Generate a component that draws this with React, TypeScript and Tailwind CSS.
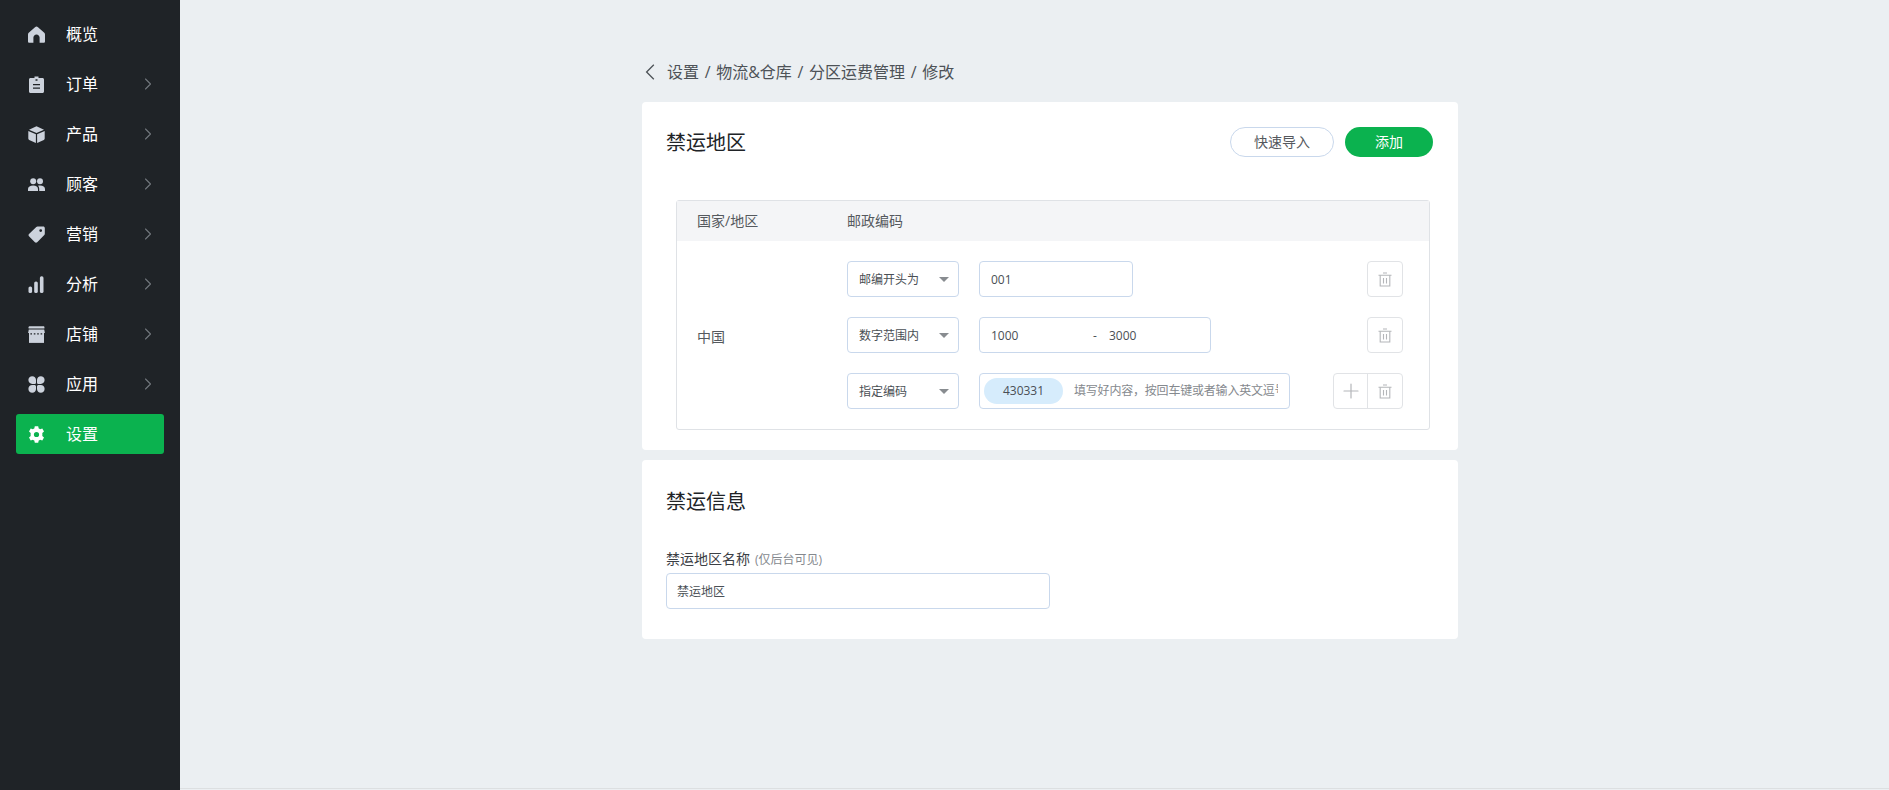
import { ChevronRight, Plus } from "lucide-react"

const font = { fontFamily: '"Open Sans", "Noto Sans CJK SC", sans-serif' }

function HomeIcon() {
  return (
    <svg viewBox="0 0 17 17" className="h-[17px] w-[17px]" fill="currentColor">
      <path d="M8.5 0.5 C9 0.5 9.5 0.8 10 1.2 L16 6.5 C16.6 7 17 7.6 17 8.4 V15.5 C17 16.3 16.4 16.8 15.6 16.8 H11.6 V11.5 C11.6 9.8 10.2 8.4 8.5 8.4 C6.8 8.4 5.4 9.8 5.4 11.5 V16.8 H1.4 C0.6 16.8 0 16.3 0 15.5 V8.4 C0 7.6 0.4 7 1 6.5 L7 1.2 C7.5 0.8 8 0.5 8.5 0.5 Z" />
    </svg>
  )
}

function ClipboardIcon() {
  return (
    <svg viewBox="0 0 17 17" className="h-[17px] w-[17px]" fill="currentColor">
      <path
        fillRule="evenodd"
        d="M6.5 0.5 H10.5 V2 H14.5 C15.3 2 16 2.7 16 3.5 V15.5 C16 16.3 15.3 17 14.5 17 H2.5 C1.7 17 1 16.3 1 15.5 V3.5 C1 2.7 1.7 2 2.5 2 H6.5 Z M7.5 3.2 V4.7 H9.5 V3.2 Z M5 8 V9.2 H12 V8 Z M5 11.6 V12.8 H12 V11.6 Z"
      />
    </svg>
  )
}

function CubeIcon() {
  return (
    <svg viewBox="0 0 17 17" className="h-[17px] w-[17px]" fill="currentColor">
      <path d="M8.5 0.3 L16 3.7 L8.5 7 L1 3.7 Z" />
      <path d="M0.3 5 L7.9 8.2 V16.9 L1.2 13.9 C0.6 13.6 0.3 13.1 0.3 12.5 Z" />
      <path d="M16.7 5 L9.1 8.2 V16.9 L15.8 13.9 C16.4 13.6 16.7 13.1 16.7 12.5 Z" />
    </svg>
  )
}

function PeopleIcon() {
  return (
    <svg viewBox="0 0 17 17" className="h-[17px] w-[17px]" fill="currentColor">
      <circle cx="5.2" cy="5.2" r="3" />
      <circle cx="12" cy="5.2" r="3" />
      <path d="M0 15 V13 C0 10.8 2.2 9.4 5.2 9.4 C8.2 9.4 10 10.8 10 13 V15 Z" />
      <path d="M11.2 15 V12.8 C11.2 11.6 10.8 10.6 10 9.8 C10.7 9.5 11.4 9.4 12.2 9.4 C15 9.4 17 10.8 17 13 V15 Z" />
    </svg>
  )
}

function TagIcon() {
  return (
    <svg viewBox="0 0 17 17" className="h-[17px] w-[17px]" fill="currentColor">
      <path
        fillRule="evenodd"
        d="M9.5 0.5 H15.2 C16.1 0.5 16.8 1.2 16.8 2.1 V7.8 C16.8 8.3 16.6 8.7 16.3 9 L9.2 16.2 C8.5 16.8 7.5 16.8 6.9 16.2 L1 10.3 C0.4 9.7 0.4 8.7 1 8.1 L8.3 1 C8.6 0.7 9 0.5 9.5 0.5 Z M12.7 3.2 A1.4 1.4 0 1 0 12.7 6 A1.4 1.4 0 1 0 12.7 3.2 Z"
      />
    </svg>
  )
}

function BarsIcon() {
  return (
    <svg viewBox="0 0 17 17" className="h-[17px] w-[17px]" fill="currentColor">
      <rect x="0.5" y="10.5" width="3.6" height="6.5" rx="1.6" />
      <rect x="6.2" y="5.5" width="3.6" height="11.5" rx="1.6" />
      <rect x="11.9" y="0.3" width="3.6" height="16.7" rx="1.6" />
    </svg>
  )
}

function StoreIcon() {
  return (
    <svg viewBox="0 0 17 17" className="h-[17px] w-[17px]" fill="currentColor">
      <path d="M1.5 0.3 H15.5 C16 0.3 16.4 0.7 16.4 1.3 V2.4 H0.6 V1.3 C0.6 0.7 1 0.3 1.5 0.3 Z" />
      <path d="M0.8 3.4 H16.2 L16.9 7 H0.1 Z" />
      <path d="M1 7 H16 V16.9 H1 Z" />
      <path
        fill="#1f2327"
        d="M2.4 7.2 H4 V8.4 H2.4 Z M5.8 7.2 H7.4 V8.4 H5.8 Z M9.2 7.2 H10.8 V8.4 H9.2 Z M12.6 7.2 H14.2 V8.4 H12.6 Z"
      />
    </svg>
  )
}

function AppsIcon() {
  return (
    <svg viewBox="0 0 17 17" className="h-[17px] w-[17px]" fill="currentColor">
      <path d="M4.2 0.3 C6.3 0.3 8 2 8 4.1 V6.4 C8 7.3 7.3 8 6.4 8 H4.2 C2.1 8 0.4 6.3 0.4 4.1 C0.4 2 2.1 0.3 4.2 0.3 Z" />
      <path d="M12.8 0.3 C14.9 0.3 16.6 2 16.6 4.1 C16.6 6.3 14.9 8 12.8 8 H10.6 C9.7 8 9 7.3 9 6.4 V4.1 C9 2 10.7 0.3 12.8 0.3 Z" />
      <path d="M6.4 9 C7.3 9 8 9.7 8 10.6 V12.9 C8 15 6.3 16.7 4.2 16.7 C2.1 16.7 0.4 15 0.4 12.9 C0.4 10.7 2.1 9 4.2 9 Z" />
      <path d="M10.6 9 H12.8 C14.9 9 16.6 10.7 16.6 12.9 C16.6 15 14.9 16.7 12.8 16.7 C10.7 16.7 9 15 9 12.9 V10.6 C9 9.7 9.7 9 10.6 9 Z" />
    </svg>
  )
}

function GearIcon() {
  return (
    <svg viewBox="0 0 17 17" className="h-[17px] w-[17px]" fill="currentColor">
      <path
        fillRule="evenodd"
        d="M6.8 0.2 H10.2 L10.7 2.4 C11.2 2.6 11.7 2.9 12.1 3.2 L14.3 2.5 L16 5.5 L14.3 7 C14.4 7.6 14.4 9.4 14.3 10 L16 11.5 L14.3 14.5 L12.1 13.8 C11.7 14.1 11.2 14.4 10.7 14.6 L10.2 16.8 H6.8 L6.3 14.6 C5.8 14.4 5.3 14.1 4.9 13.8 L2.7 14.5 L1 11.5 L2.7 10 C2.6 9.4 2.6 7.6 2.7 7 L1 5.5 L2.7 2.5 L4.9 3.2 C5.3 2.9 5.8 2.6 6.3 2.4 Z M8.5 5.9 A2.6 2.6 0 1 0 8.5 11.1 A2.6 2.6 0 1 0 8.5 5.9 Z"
      />
    </svg>
  )
}

function BackIcon() {
  return (
    <svg viewBox="0 0 10 16" className="ml-[3px] h-4 w-[10px]" fill="none" stroke="#4d5257" strokeWidth="1.3">
      <path d="M8.8 0.8 L1.6 8 L8.8 15.2" />
    </svg>
  )
}

function TrashIcon() {
  return (
    <svg viewBox="0 0 14 15" className="h-[15px] w-[14px]" fill="none" stroke="#b4b6b9" strokeWidth="1.1">
      <path d="M5 1 H9 M0.5 3.2 H13.5" />
      <path d="M2.2 3.2 V14 H11.8 V3.2" />
      <path d="M5.5 6 V11.5 M8.5 6 V11.5" />
    </svg>
  )
}

const navItems = [
  { label: "概览", icon: <HomeIcon /> },
  { label: "订单", icon: <ClipboardIcon />, arrow: true },
  { label: "产品", icon: <CubeIcon />, arrow: true },
  { label: "顾客", icon: <PeopleIcon />, arrow: true },
  { label: "营销", icon: <TagIcon />, arrow: true },
  { label: "分析", icon: <BarsIcon />, arrow: true },
  { label: "店铺", icon: <StoreIcon />, arrow: true },
  { label: "应用", icon: <AppsIcon />, arrow: true },
  { label: "设置", icon: <GearIcon />, active: true },
]

function Sidebar() {
  return (
    <aside className="flex h-[790px] w-[180px] shrink-0 flex-col gap-[10px] bg-[#1f2327] px-4 pt-[14px]">
      {navItems.map((item) => (
        <div
          key={item.label}
          className={
            item.active
              ? "flex h-10 items-center rounded-[3px] bg-[#0bb24f] pl-3 pr-[6px] text-white"
              : "flex h-10 items-center rounded-[3px] pl-3 pr-[6px] text-[#ccd2dc]"
          }
        >
          {item.icon}
          <span className="ml-[21px] flex-1 text-base text-white">{item.label}</span>
          {item.arrow && <ChevronRight size={20} strokeWidth={1.3} className="text-[#72777d]" />}
        </div>
      ))}
    </aside>
  )
}

function SelectBox({ label }: { label: string }) {
  return (
    <div className="flex h-9 w-28 items-center justify-between rounded-[4px] border border-[#c9d8ec] pl-[11px] pr-[9px] text-xs text-[#4a4f55]">
      <span className="pt-px">{label}</span>
      <span className="h-0 w-0 border-x-[5px] border-t-[5px] border-x-transparent border-t-[#888c90]" />
    </div>
  )
}

function IconButtons({ withPlus }: { withPlus?: boolean }) {
  return (
    <div className="ml-auto flex h-9 rounded-[4px] border border-[#e1e3e6]">
      {withPlus && (
        <div className="flex w-[34px] items-center justify-center border-r border-[#e1e3e6]">
          <Plus size={24} strokeWidth={1.2} className="text-[#b4b6b9]" />
        </div>
      )}
      <div className="flex w-[34px] items-center justify-center">
        <TrashIcon />
      </div>
    </div>
  )
}

export default function App() {
  return (
    <div className="flex h-[790px] w-full overflow-hidden bg-[#ebeff2]" style={font}>
      <Sidebar />
      <div className="h-[789px] flex-1 border-b border-[#dcdfe1]">
        <main className="ml-[462px] w-[816px]">
          <div className="flex h-[102px] items-center gap-3 pt-[42px] text-base text-[#4d5257]">
            <BackIcon />
            <span className="[word-spacing:1.5px]">设置 / 物流&amp;仓库 / 分区运费管理 / 修改</span>
          </div>

          <section className="h-[348px] rounded-[4px] bg-white px-6 pt-[25px]">
            <div className="flex h-[30px] items-center justify-between">
              <h2 className="pt-[2px] text-xl font-normal text-[#202327]">禁运地区</h2>
              <div className="mr-[1px] flex gap-[11px]">
                <button className="h-[30px] w-[104px] rounded-full border border-[#c9d8ec] text-sm text-[#55595e]">
                  快速导入
                </button>
                <button className="h-[30px] w-[88px] rounded-full bg-[#0bb24f] text-sm text-white">添加</button>
              </div>
            </div>

            <div className="ml-[10px] mr-[4px] mt-[43px] h-[230px] rounded-[3px] border border-[#dfe2e6]">
              <div className="flex h-10 items-center bg-[#f4f5f7] text-sm text-[#55595e]">
                <span className="ml-5 w-[150px]">国家/地区</span>
                <span>邮政编码</span>
              </div>
              <div className="flex items-center">
                <span className="ml-5 w-[150px] pt-1 text-sm text-[#55595e]">中国</span>
                <div className="flex w-[556px] flex-col gap-5 py-5">
                  <div className="flex items-center gap-5">
                    <SelectBox label="邮编开头为" />
                    <div className="flex h-9 w-[154px] items-center rounded-[4px] border border-[#c9d8ec] px-[11px] pt-px text-xs text-[#4a4f55]">
                      001
                    </div>
                    <IconButtons />
                  </div>
                  <div className="flex items-center gap-5">
                    <SelectBox label="数字范围内" />
                    <div className="flex h-9 w-[232px] items-center rounded-[4px] border border-[#c9d8ec] pl-[11px] pt-px text-xs text-[#4a4f55]">
                      <span className="w-[102px]">1000</span>
                      <span className="w-4">-</span>
                      <span>3000</span>
                    </div>
                    <IconButtons />
                  </div>
                  <div className="flex items-center gap-5">
                    <SelectBox label="指定编码" />
                    <div className="flex h-9 w-[311px] items-center overflow-hidden rounded-[4px] border border-[#c9d8ec] pl-1 pr-[11px] text-xs">
                      <span className="flex h-[26px] w-[79px] shrink-0 items-center justify-center rounded-full bg-[#d6ecfc] text-[#4a4f55]">
                        430331
                      </span>
                      <span className="ml-[11px] overflow-hidden whitespace-nowrap tracking-[-0.2px] text-[#85898e]">
                        填写好内容，按回车键或者输入英文逗号
                      </span>
                    </div>
                    <IconButtons withPlus />
                  </div>
                </div>
              </div>
            </div>
          </section>

          <section className="mt-[10px] h-[179px] rounded-[4px] bg-white px-6 pt-[30px]">
            <h2 className="text-xl font-normal leading-6 text-[#202327]">禁运信息</h2>
            <div className="mt-[35px] flex items-baseline gap-[5px] leading-5">
              <span className="text-sm text-[#3c4045]">禁运地区名称</span>
              <span className="text-xs text-[#85898e]">(仅后台可见)</span>
            </div>
            <div className="mt-[4px] flex h-9 w-96 items-center rounded-[4px] border border-[#c9d8ec] px-[10px] pt-px text-xs text-[#4a4f55]">
              禁运地区
            </div>
          </section>
        </main>
      </div>
    </div>
  )
}
